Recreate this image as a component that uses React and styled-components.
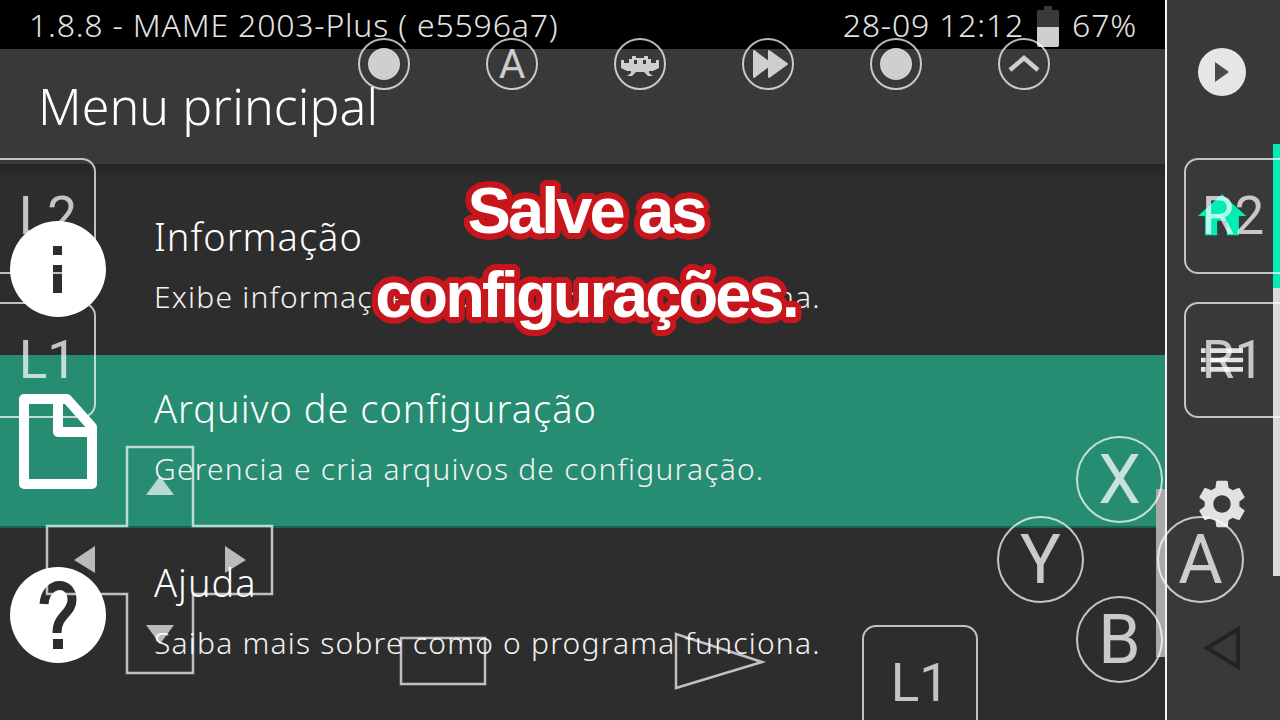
import React from 'react'
import styled, { createGlobalStyle } from 'styled-components'
import { MdHome, MdList, MdSettings } from 'react-icons/md'

const Global = createGlobalStyle`
    html, body { margin: 0; padding: 0; background: #2d2d2d; }
    body { font-family: "Noto Sans", "Open Sans", sans-serif; overflow: hidden; }
`

// round red outline for the caption, a stroke would leave spikes on the v
const outline = Array.from({ length: 24 }, (_, i) => {
    const a = (i / 24) * Math.PI * 2
    return `${(Math.cos(a) * 6).toFixed(1)}px ${(Math.sin(a) * 6).toFixed(1)}px 0 #c8161d`
}).join(', ')

const Screen = styled.div`
    position: relative;
    width: 1280px;
    height: 720px;
    display: flex;
    overflow: hidden;
    color: #fff;
`

const Main = styled.div`
    position: relative;
    width: 1165px;
    display: flex;
    flex-direction: column;
    background: #2d2d2d;
`

const StatusBar = styled.div`
    height: 49px;
    flex: none;
    box-sizing: border-box;
    padding: 0 28px 0 29px;
    display: flex;
    align-items: center;
    justify-content: space-between;
    background: #000;
    color: #e4e4e4;
    font-size: 32px;
    font-weight: 300;
    letter-spacing: 0.8px;
`

const StatusRight = styled.div`
    display: flex;
    align-items: center;
    gap: 13px;
`

const Battery = styled.div`
    position: relative;
    width: 22px;
    height: 37px;
    margin-top: 7px;
    border-radius: 2px;
    background: linear-gradient(#3a3a3a 0 47%, #cfcfcf 47%);
    &::before {
        content: '';
        position: absolute;
        top: -4px;
        left: 7px;
        width: 8px;
        height: 4px;
        background: #3a3a3a;
    }
`

const Header = styled.div`
    height: 115px;
    flex: none;
    box-sizing: border-box;
    padding: 25px 0 0 38px;
    background: #393939;
    font-size: 50px;
    font-weight: 300;
    line-height: 64px;
    letter-spacing: 0.1px;
`

const List = styled.div`
    flex: 1;
    padding-top: 18px;
    background: linear-gradient(#262626, #2d2d2d 16px);
`

const Row = styled.div`
    height: 173px;
    box-sizing: border-box;
    padding-left: 10px;
    display: flex;
    align-items: center;
    gap: 48px;
    background: ${p => (p.$active ? '#268c72' : 'transparent')};
    border-bottom: ${p => (p.$active ? '2px solid #1a6350' : '0')};
`

const RowIcon = styled.div`
    width: 96px;
    height: 96px;
    flex: none;
    display: flex;
    align-items: center;
    justify-content: center;
    border-radius: ${p => (p.$round ? '50%' : '0')};
    background: ${p => (p.$round ? '#fff' : 'transparent')};
`

const RowText = styled.div`
    display: flex;
    flex-direction: column;
    gap: 19px;
    padding-bottom: 6px;
`

const RowTitle = styled.div`
    font-size: 38px;
    font-weight: 300;
    line-height: 44px;
    letter-spacing: 1px;
`

const RowSub = styled.div`
    font-size: 30px;
    font-weight: 300;
    line-height: 40px;
    letter-spacing: 1.2px;
    color: #f2f2f2;
`

const Divider = styled.div`
    width: 2px;
    flex: none;
    background: #f2f2f2;
`

const Sidebar = styled.div`
    flex: 1;
    display: grid;
    grid-template-rows: repeat(5, 144px);
    background: #393939;
`

const Slot = styled.div`
    display: flex;
    align-items: center;
    justify-content: center;
    padding-left: 4px;
    border-right: 7px solid ${p => p.$track || 'transparent'};
    color: ${p => p.$color || '#e2e2e2'};
`

const PlayDisc = styled.div`
    width: 48px;
    height: 48px;
    border-radius: 50%;
    background: #e6e6e6;
    display: flex;
    align-items: center;
    justify-content: center;
`

const ScrollThumb = styled.div`
    position: absolute;
    left: 1156px;
    top: 489px;
    width: 9px;
    height: 168px;
    background: #a9a9a9;
`

const Caption = styled.div`
    position: absolute;
    left: 286px;
    top: 169px;
    width: 600px;
    text-align: center;
    font-family: "Liberation Sans", Arial, sans-serif;
    font-weight: 700;
    font-size: 65px;
    line-height: 84px;
    letter-spacing: -2.9px;
    color: #fff;
    text-shadow: ${outline};
`

const Overlay = styled.div`
    position: absolute;
    inset: 0;
    color: rgba(255, 255, 255, 0.75);
`

const Ring = styled.div`
    position: absolute;
    left: ${p => p.$x}px;
    top: ${p => p.$y}px;
    width: ${p => p.$size}px;
    height: ${p => p.$size}px;
    box-sizing: border-box;
    border: 2px solid rgba(255, 255, 255, 0.72);
    border-radius: 50%;
    display: flex;
    align-items: center;
    justify-content: center;
    font-family: Roboto, "Liberation Sans", sans-serif;
    font-weight: 400;
    font-size: ${p => Math.round(p.$size * 0.78)}px;
    line-height: 1;
    color: rgba(255, 255, 255, 0.75);
`

// 116 wide like the L1 on the bottom, the side ones run off the screen
const Shoulder = styled.div`
    position: absolute;
    left: ${p => p.$x}px;
    top: ${p => p.$y}px;
    width: 116px;
    height: 116px;
    box-sizing: border-box;
    padding: ${p => p.$pad || '0'};
    border: 2px solid rgba(255, 255, 255, 0.7);
    border-radius: 14px;
    display: flex;
    align-items: center;
    justify-content: center;
    font-family: Roboto, "Liberation Sans", sans-serif;
    font-weight: 400;
    font-size: 53px;
    line-height: 1;
    color: rgba(255, 255, 255, 0.72);
`

const Drawn = styled.svg`
    position: absolute;
    left: 0;
    top: 0;
    width: 1280px;
    height: 720px;
    pointer-events: none;
`

const Dot = styled.span`
    width: 32px;
    height: 32px;
    border-radius: 50%;
    background: #cfcfcf;
`

const InnerIcon = styled.svg`
    width: 48px;
    height: 48px;
    display: block;
`

function MenuRow({ title, sub, active, round, children }) {
    return (
        <Row $active={active}>
            <RowIcon $round={round}>{children}</RowIcon>
            <RowText>
                <RowTitle>{title}</RowTitle>
                <RowSub>{sub}</RowSub>
            </RowText>
        </Row>
    )
}

function Invader() {
    return (
        <InnerIcon viewBox="0 0 48 48">
            <path
                fill="#cfcfcf"
                d="M5 28v-8h3v3h5v-4h3v-3h4v2h8v-2h4v3h3v4h5v-3h3v8l-6 3h-4v2l4 3h-5l-4-4h-8l-4 4h-5l4-3v-2h-4z"
            />
            <path fill="#3a3a3a" d="M18 20h3v4h-3zM27 20h3v4h-3z" />
        </InnerIcon>
    )
}

function Forward() {
    return (
        <InnerIcon viewBox="0 0 48 48">
            <path fill="#cfcfcf" stroke="#cfcfcf" strokeWidth="2" strokeLinejoin="round" d="M10 11l17 13-17 13zM25 11l18 13-18 13z" />
        </InnerIcon>
    )
}

function Chevron() {
    return (
        <InnerIcon viewBox="0 0 48 48">
            <path fill="none" stroke="#cfcfcf" strokeWidth="4.5" d="M10 30l14-12 14 12" />
        </InnerIcon>
    )
}

export default function App() {
    return (
        <Screen>
            <Global />
            <Main>
                <StatusBar>
                    <span>1.8.8 - MAME 2003-Plus ( e5596a7)</span>
                    <StatusRight>
                        <span>28-09 12:12</span>
                        <Battery />
                        <span>67%</span>
                    </StatusRight>
                </StatusBar>
                <Header>Menu principal</Header>
                <List>
                    <MenuRow title="Informação" sub="Exibe informações do núcleo, rede e sistema." round>
                        <svg width="96" height="96" viewBox="0 0 96 96">
                            <path fill="#2d2d2d" d="M43 25h9v9h-9zM43 44h9v28h-9z" />
                        </svg>
                    </MenuRow>
                    <MenuRow title="Arquivo de configuração" sub="Gerencia e cria arquivos de configuração." active>
                        <svg width="96" height="96" viewBox="0 0 96 96">
                            <path
                                fill="none"
                                stroke="#fff"
                                strokeWidth="10"
                                strokeLinejoin="round"
                                d="M14 6h43l25 28v57H14zM48 6v33h34"
                            />
                        </svg>
                    </MenuRow>
                    <MenuRow title="Ajuda" sub="Saiba mais sobre como o programa funciona." round>
                        <svg width="96" height="96" viewBox="0 0 96 96">
                            <path
                                fill="none"
                                stroke="#2d2d2d"
                                strokeWidth="9"
                                d="M34 37c2-24 28-24 28-4 0 14-15 14-15 33"
                            />
                            <path fill="#2d2d2d" d="M43 72h10v10H43z" />
                        </svg>
                    </MenuRow>
                </List>
                <ScrollThumb />
            </Main>
            <Divider />
            <Sidebar>
                <Slot>
                    <PlayDisc>
                        <svg width="20" height="24" viewBox="0 0 20 24">
                            <path fill="#4a4a4a" d="M3 2l14 10L3 22z" />
                        </svg>
                    </PlayDisc>
                </Slot>
                <Slot $track="#00eeb4" $color="#00eeb4">
                    <MdHome size={58} />
                </Slot>
                <Slot $track="#dcdcdc">
                    <MdList size={56} />
                </Slot>
                <Slot $track="#dcdcdc">
                    <MdSettings size={58} />
                </Slot>
                <Slot>
                    <svg width="38" height="46" viewBox="0 0 38 46">
                        <path fill="none" stroke="#232323" strokeWidth="4" d="M35 4v38L4 23z" />
                    </svg>
                </Slot>
            </Sidebar>

            <Caption>
                Salve as
                <br />
                configurações.
            </Caption>

            <Overlay>
                <Ring $x={358} $y={38} $size={52}><Dot /></Ring>
                <Ring $x={486} $y={38} $size={52}>A</Ring>
                <Ring $x={614} $y={38} $size={52}><Invader /></Ring>
                <Ring $x={742} $y={38} $size={52}><Forward /></Ring>
                <Ring $x={870} $y={38} $size={52}><Dot /></Ring>
                <Ring $x={998} $y={38} $size={52}><Chevron /></Ring>

                <Ring $x={1076} $y={436} $size={87}>X</Ring>
                <Ring $x={997} $y={516} $size={87}>Y</Ring>
                <Ring $x={1157} $y={516} $size={87}>A</Ring>
                <Ring $x={1076} $y={596} $size={87}>B</Ring>

                <Shoulder $x={-20} $y={158} $pad="0 0 0 20px">L2</Shoulder>
                <Shoulder $x={-20} $y={302} $pad="0 0 0 20px">L1</Shoulder>
                <Shoulder $x={1184} $y={158} $pad="0 18px 0 0">R2</Shoulder>
                <Shoulder $x={1184} $y={302} $pad="0 18px 0 0">R1</Shoulder>
                <Shoulder $x={862} $y={625}>L1</Shoulder>

                <Drawn viewBox="0 0 1280 720">
                    <g fill="none" stroke="rgba(255,255,255,0.7)" strokeWidth="2.5">
                        <path d="M127 447h66v79h79v68h-79v79h-66v-79H47v-68h80z" />
                        <path d="M401 638h84v46h-84z" />
                        <path d="M676 634l86 28-86 26z" />
                    </g>
                    <g fill="rgba(255,255,255,0.68)">
                        <path d="M160 476l14 19h-28z" />
                        <path d="M160 644l14-19h-28z" />
                        <path d="M74 560l21-14v27z" />
                        <path d="M246 560l-21-14v27z" />
                    </g>
                </Drawn>
            </Overlay>
        </Screen>
    )
}
